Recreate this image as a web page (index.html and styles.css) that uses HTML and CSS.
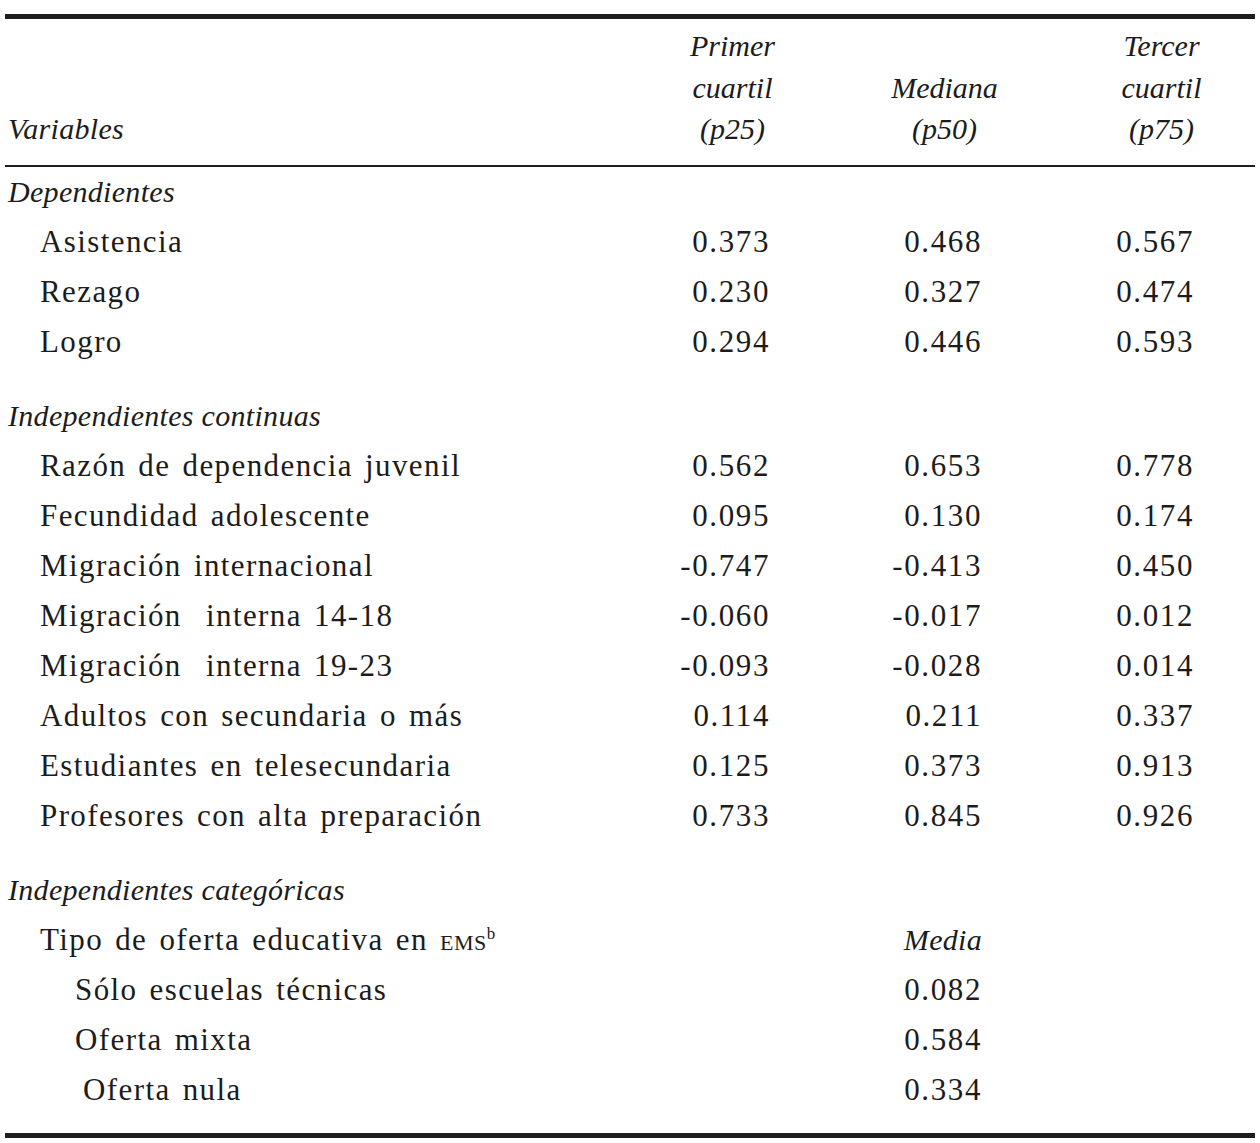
FILE: index.html
```html
<!DOCTYPE html>
<html lang="es">
<head>
<meta charset="utf-8">
<title>Cuadro</title>
<link rel="stylesheet" href="styles.css">
</head>
<body>
<div class="table">
  <div class="rule thick"></div>
  <div class="row head">
    <div class="label hlabel">Variables</div>
    <div class="hcell">Primer<br>cuartil<br>(p25)</div>
    <div class="hcell">Mediana<br>(p50)</div>
    <div class="hcell last">Tercer<br>cuartil<br>(p75)</div>
  </div>
  <div class="rule thin"></div>

  <div class="row"><div class="label sec">Dependientes</div></div>
  <div class="row"><div class="label l1">Asistencia</div><div class="num">0.373</div><div class="num">0.468</div><div class="num">0.567</div></div>
  <div class="row"><div class="label l1">Rezago</div><div class="num">0.230</div><div class="num">0.327</div><div class="num">0.474</div></div>
  <div class="row"><div class="label l1">Logro</div><div class="num">0.294</div><div class="num">0.446</div><div class="num">0.593</div></div>

  <div class="row gap"><div class="label sec">Independientes continuas</div></div>
  <div class="row"><div class="label l1">Razón de dependencia juvenil</div><div class="num">0.562</div><div class="num">0.653</div><div class="num">0.778</div></div>
  <div class="row"><div class="label l1">Fecundidad adolescente</div><div class="num">0.095</div><div class="num">0.130</div><div class="num">0.174</div></div>
  <div class="row"><div class="label l1">Migración internacional</div><div class="num">-0.747</div><div class="num">-0.413</div><div class="num">0.450</div></div>
  <div class="row"><div class="label l1">Migración&nbsp; interna 14-18</div><div class="num">-0.060</div><div class="num">-0.017</div><div class="num">0.012</div></div>
  <div class="row"><div class="label l1">Migración&nbsp; interna 19-23</div><div class="num">-0.093</div><div class="num">-0.028</div><div class="num">0.014</div></div>
  <div class="row"><div class="label l1">Adultos con secundaria o más</div><div class="num">0.114</div><div class="num">0.211</div><div class="num">0.337</div></div>
  <div class="row"><div class="label l1">Estudiantes en telesecundaria</div><div class="num">0.125</div><div class="num">0.373</div><div class="num">0.913</div></div>
  <div class="row"><div class="label l1">Profesores con alta preparación</div><div class="num">0.733</div><div class="num">0.845</div><div class="num">0.926</div></div>

  <div class="row gap"><div class="label sec">Independientes categóricas</div></div>
  <div class="row"><div class="label l1">Tipo de oferta educativa en <span class="sc">ems</span><sup>b</sup></div><div class="num"></div><div class="num it">Media</div><div class="num"></div></div>
  <div class="row"><div class="label l2">Sólo escuelas técnicas</div><div class="num"></div><div class="num">0.082</div><div class="num"></div></div>
  <div class="row"><div class="label l2">Oferta mixta</div><div class="num"></div><div class="num">0.584</div><div class="num"></div></div>
  <div class="row"><div class="label l3">Oferta nula</div><div class="num"></div><div class="num">0.334</div><div class="num"></div></div>
  <div class="rule thick bottom"></div>
</div>
</body>
</html>
```
FILE: styles.css
```css
html, body {
  margin: 0;
  padding: 0;
  background: #ffffff;
}

body {
  font-family: "Liberation Serif", "Times New Roman", serif;
  color: #1c1c1c;
  font-size: 31px;
}

.table {
  width: 1250px;
  margin: 14px 0 0 5px;
}

.rule {
  background: #1e1e1e;
}

.rule.thick {
  height: 5px;
}

.rule.thin {
  height: 2px;
}

.rule.bottom {
  margin-top: 18px;
}

.row {
  display: grid;
  grid-template-columns: 593px 155px 155px 155px;
  column-gap: 57px;
  height: 50px;
  line-height: 50px;
  align-items: center;
}

.row.gap {
  margin-top: 24px;
}

.row.head {
  height: auto;
  line-height: 41.5px;
  align-items: end;
  padding: 6px 0 15px;
  font-style: italic;
  font-size: 30px;
}

.hcell {
  text-align: center;
}

.hcell.last {
  padding-left: 10px;
}

.label {
  white-space: nowrap;
  letter-spacing: 1.4px;
  word-spacing: 3px;
}

.hlabel,
.sec {
  padding-left: 3px;
  font-style: italic;
  font-size: 30px;
  letter-spacing: 0.3px;
  word-spacing: 0;
}

.l1 {
  padding-left: 35px;
}

.l2 {
  padding-left: 70px;
}

.l3 {
  padding-left: 78px;
}

.num {
  text-align: right;
  padding-right: 40px;
  letter-spacing: 1.6px;
}

.num.it {
  font-style: italic;
  font-size: 30px;
  letter-spacing: 0.3px;
}

.sc {
  font-variant: small-caps;
  letter-spacing: 0.5px;
}

sup {
  font-size: 17px;
  line-height: 0;
  vertical-align: 11px;
}
```
